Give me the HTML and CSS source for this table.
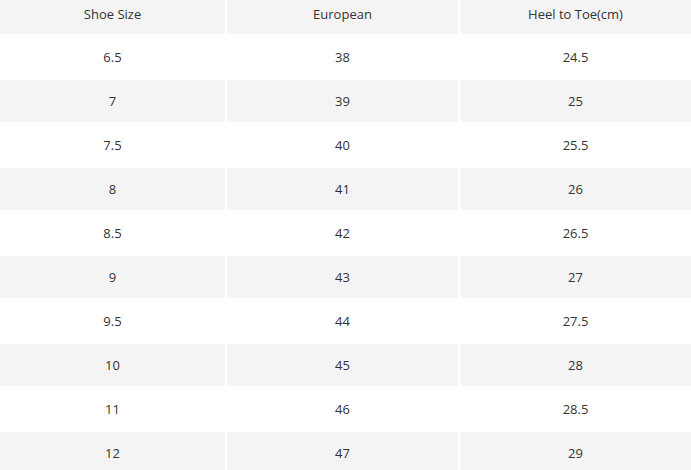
FILE: index.html
```html
<!DOCTYPE html>
<html lang="en">
<head>
<meta charset="utf-8">
<title>Size Chart</title>
<link rel="stylesheet" href="styles.css">
</head>
<body>
<table class="size-table">
  <colgroup>
    <col class="col-a">
    <col class="col-b">
    <col class="col-c">
  </colgroup>
  <thead>
    <tr><th>Shoe Size</th><th>European</th><th>Heel to Toe(cm)</th></tr>
  </thead>
  <tbody>
    <tr><td>6.5</td><td>38</td><td>24.5</td></tr>
    <tr class="alt"><td>7</td><td>39</td><td>25</td></tr>
    <tr><td>7.5</td><td>40</td><td>25.5</td></tr>
    <tr class="alt"><td>8</td><td>41</td><td>26</td></tr>
    <tr><td>8.5</td><td>42</td><td>26.5</td></tr>
    <tr class="alt"><td>9</td><td>43</td><td>27</td></tr>
    <tr><td>9.5</td><td>44</td><td>27.5</td></tr>
    <tr class="alt"><td>10</td><td>45</td><td>28</td></tr>
    <tr><td>11</td><td>46</td><td>28.5</td></tr>
    <tr class="alt"><td>12</td><td>47</td><td>29</td></tr>
  </tbody>
</table>
</body>
</html>
```
FILE: styles.css
```css
html, body {
  margin: 0;
  padding: 0;
  background: #ffffff;
  overflow: hidden;
}
.size-table {
  border-collapse: separate;
  border-spacing: 2px;
  margin: -2px 0 0 -2px;
  width: 695px;
  table-layout: fixed;
  font-family: "Open Sans", "Liberation Sans", sans-serif;
  font-size: 13px;
  color: #333333;
}
.col-a { width: 225px; }
.col-b { width: 231px; }
.col-c { width: 231px; }
.size-table th,
.size-table td {
  padding: 0;
  text-align: center;
  vertical-align: middle;
  line-height: 18px;
}
.size-table th {
  height: 28px;
  padding-bottom: 6px;
  font-weight: normal;
  background: #f4f4f4;
}
.size-table td {
  height: 42px;
}
.size-table tr.alt td {
  background: #f4f4f4;
}
```
